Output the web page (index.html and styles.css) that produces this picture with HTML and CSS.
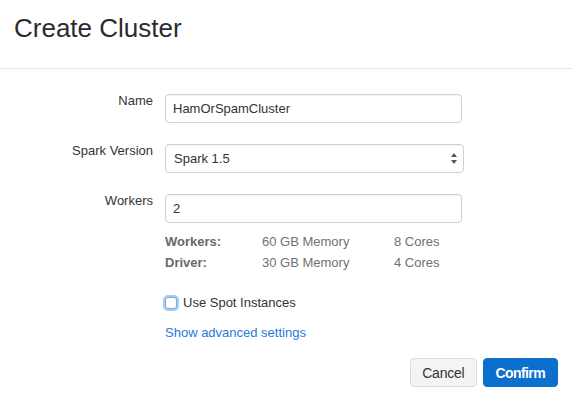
FILE: index.html
```html
<!DOCTYPE html>
<html>
<head>
<meta charset="utf-8">
<link rel="stylesheet" href="styles.css">
</head>
<body>
<div class="header"><h1 class="title">Create Cluster</h1></div>
<div class="body">
  <div class="row">
    <label class="label">Name</label>
    <div class="control"><input class="input" type="text" value="HamOrSpamCluster"></div>
  </div>
  <div class="row">
    <label class="label">Spark Version</label>
    <div class="control select-wrap">
      <select class="select"><option>Spark 1.5</option></select>
      <svg class="arrows" width="6" height="11" viewBox="0 0 6 11"><path d="M3 0 L6 4 L0 4 Z M0 7 L6 7 L3 11 Z" fill="#555"/></svg>
    </div>
  </div>
  <div class="row last">
    <label class="label">Workers</label>
    <div class="control"><input class="input" type="text" value="2"></div>
  </div>
  <div class="info">
    <span class="k">Workers:</span><span>60 GB Memory</span><span>8 Cores</span>
    <span class="k">Driver:</span><span>30 GB Memory</span><span>4 Cores</span>
  </div>
  <div class="check-row"><span class="checkbox"></span><span>Use Spot Instances</span></div>
  <a class="link" href="#">Show advanced settings</a>
  <div class="footer">
    <button class="btn cancel">Cancel</button>
    <button class="btn confirm">Confirm</button>
  </div>
</div>
</body>
</html>
```
FILE: styles.css
```css
* { box-sizing: border-box; }
body {
  margin: 0;
  font-family: "Liberation Sans", Arial, sans-serif;
  font-size: 13px;
  color: #333;
  background: #fff;
}
.header {
  height: 69px;
  padding: 15px 0 0 14px;
  border-bottom: 1px solid #e5e5e5;
}
.title {
  margin: 0;
  font-size: 26px;
  line-height: 26px;
  font-weight: normal;
  color: #2b2b2b;
}
.body {
  padding-top: 25px;
  display: flex;
  flex-direction: column;
}
.row {
  display: grid;
  grid-template-columns: 153px 299px;
  column-gap: 12px;
  margin-bottom: 21px;
  align-items: start;
}
.row.last { margin-bottom: 0; }
.label {
  text-align: right;
  line-height: 16px;
  margin-top: -1px;
  color: #333;
}
.input, .select {
  width: 297px;
  height: 29px;
  padding: 0 7px;
  border: 1px solid #d0d0d0;
  border-radius: 4px;
  font-family: "Liberation Sans", Arial, sans-serif;
  font-size: 13px;
  color: #333;
  background: #fff;
  box-shadow: inset 0 1px 1px rgba(0,0,0,0.05);
  outline: none;
}
.select-wrap { position: relative; }
.select {
  width: 299px;
  -webkit-appearance: none;
  appearance: none;
  padding-left: 8px;
}
.arrows {
  position: absolute;
  left: 286px;
  top: 9px;
}
.info {
  display: grid;
  grid-template-columns: 97px 132px auto;
  margin: 8px 0 0 165px;
  line-height: 21px;
  color: #717171;
}
.info .k { font-weight: bold; color: #6a6a6a; }
.check-row {
  display: flex;
  align-items: center;
  margin: 22px 0 0 165px;
  line-height: 16px;
}
.checkbox {
  width: 12px;
  height: 12px;
  border: 1px solid #7aa9e0;
  border-radius: 3px;
  background: #fff;
  box-shadow: 0 0 0 2px rgba(110,170,235,0.6);
  margin-right: 6px;
}
.link {
  margin: 14px 0 0 165px;
  line-height: 16px;
  color: #2a79dc;
  text-decoration: none;
  align-self: flex-start;
}
.footer {
  display: flex;
  justify-content: flex-end;
  gap: 6px;
  margin: 17px 14px 0 0;
}
.btn {
  height: 29px;
  padding: 0 12px;
  border-radius: 4px;
  font-family: "Liberation Sans", Arial, sans-serif;
  font-size: 14px;
}
.cancel {
  padding: 0 11px;
  background: #f4f4f4;
  border: 1px solid #dcdcdc;
  color: #333;
  letter-spacing: -0.2px;
}
.confirm {
  background: #0b6fce;
  border: 1px solid #0b6fce;
  color: #fff;
  font-weight: bold;
  letter-spacing: -0.6px;
}
```
